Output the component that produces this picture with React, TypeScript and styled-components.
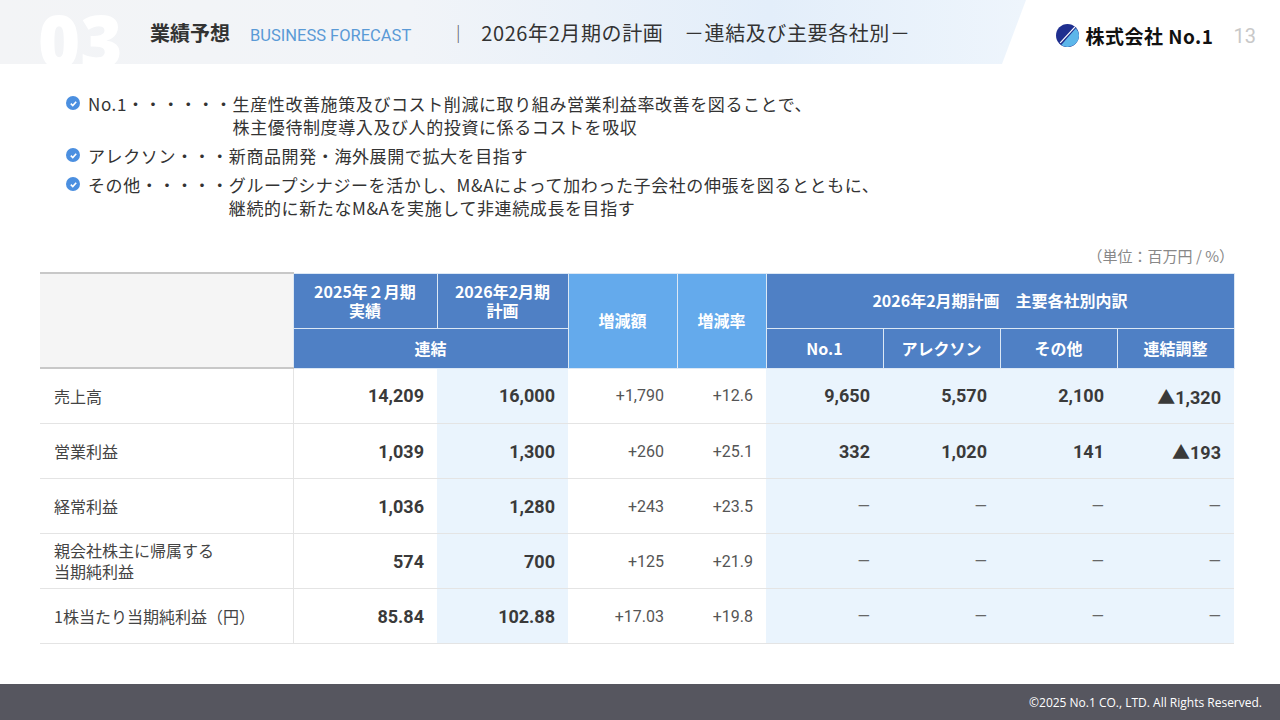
import React from 'react';
import styled, { createGlobalStyle } from 'styled-components';

const Global = createGlobalStyle`
  html, body { margin: 0; padding: 0; background: #fff; }
  body { font-family: "Noto Sans CJK JP", "Noto Sans", sans-serif; color: #333; }
`;

const Page = styled.div`
  width: 1280px;
  height: 720px;
  position: relative;
  overflow: hidden;
  display: flex;
  flex-direction: column;
`;

const Header = styled.header`
  height: 64px;
  display: flex;
  align-items: center;
  position: relative;
  background: linear-gradient(90deg, #f3f4f6 0%, #f1f4f8 40%, #e3eefa 75%, #eef5fc 100%);
  clip-path: polygon(0 0, 1026px 0, 1002px 100%, 0 100%);
  width: 1026px;
`;

const BigNum = styled.div`
  position: absolute;
  left: 38px;
  top: 4px;
  font-family: "Open Sans", sans-serif;
  font-weight: 800;
  font-size: 72px;
  line-height: 72px;
  color: #fff;
`;

const HeadText = styled.div`
  display: flex;
  align-items: baseline;
  margin-left: 150px;
  gap: 20px;
  z-index: 1;
`;

const Title = styled.span`
  font-size: 20px;
  font-weight: 700;
  color: #333;
`;

const Sub = styled.span`
  font-family: Roboto, sans-serif;
  font-size: 16.5px;
  color: #5a9ad6;
`;

const Sep = styled.span`
  color: #555;
  font-size: 18px;
  margin: 0 14px 0 18px;
`;

const Plan = styled.span`
  font-size: 20px;
  letter-spacing: 0.6px;
  color: #333;
`;

const Brand = styled.div`
  position: absolute;
  right: 24px;
  top: 22px;
  display: flex;
  align-items: center;
  gap: 6px;
`;

const BrandName = styled.span`
  font-size: 19px;
  font-weight: 700;
  color: #111;
  letter-spacing: 0.5px;
`;

const PageNo = styled.span`
  font-family: Roboto, sans-serif;
  font-size: 20px;
  color: #c8c8c8;
  margin-left: 14px;
`;

const Bullets = styled.ul`
  list-style: none;
  margin: 28px 0 0 66px;
  padding: 0;
  display: flex;
  flex-direction: column;
  gap: 6px;
`;

const Bullet = styled.li`
  display: flex;
  font-size: 17px;
  letter-spacing: 0.6px;
  line-height: 23px;
  color: #333;
`;

const Check = styled.span`
  width: 14px;
  height: 14px;
  border-radius: 50%;
  background: #4b8fe0;
  margin: 4px 8px 0 0;
  flex-shrink: 0;
  display: flex;
  align-items: center;
  justify-content: center;
`;

const Lead = styled.span`
  white-space: nowrap;
`;

const Unit = styled.div`
  text-align: right;
  margin: 26px 46px 6px 0;
  font-size: 15px;
  color: #888;
`;

const Table = styled.table`
  margin-left: 40px;
  width: 1194px;
  border-collapse: collapse;
  table-layout: fixed;
  font-family: Roboto, "Noto Sans CJK JP", sans-serif;
`;

const Th = styled.th<{ $light?: boolean }>`
  background: ${p => (p.$light ? '#64aaec' : '#4f80c5')};
  color: #fff;
  font-family: "Noto Sans CJK JP", sans-serif;
  font-weight: 700;
  font-size: 16px;
  line-height: 19px;
  border: 1px solid #dce8f5;
  padding: 0;
`;

const Blank = styled.th`
  background: #f5f5f5;
  border-top: 2px solid #c8c8c8;
  border-bottom: 2px solid #c8c8c8;
`;

const Td = styled.td<{ $bg?: boolean; $bold?: boolean; $dash?: boolean }>`
  height: 54px;
  padding: 0 13px 0 0;
  background: ${p => (p.$bg ? '#eaf4fd' : '#fff')};
  border-bottom: 1px solid #e4e4e4;
  text-align: right;
  font-size: ${p => (p.$bold ? '18px' : '16px')};
  font-weight: ${p => (p.$bold ? 700 : 400)};
  color: ${p => (p.$dash ? '#666' : p.$bold ? '#3a3a3a' : '#555')};
`;

const Label = styled.td`
  height: 54px;
  padding: 0 0 0 14px;
  font-family: "Noto Sans CJK JP", sans-serif;
  font-size: 16px;
  line-height: 21px;
  color: #444;
  border-bottom: 1px solid #e4e4e4;
  border-right: 1px solid #e4e4e4;
`;

const Footer = styled.footer`
  position: absolute;
  left: 0;
  bottom: 0;
  width: 100%;
  height: 36px;
  background: #56565f;
  color: #fff;
  font-family: "Open Sans", sans-serif;
  font-size: 12px;
  display: flex;
  align-items: center;
  justify-content: flex-end;
  padding-right: 18px;
  box-sizing: border-box;
`;

const CheckIcon = () => (
  <svg width="9" height="9" viewBox="0 0 10 10">
    <path d="M2 5.2 L4.2 7.3 L8 3" stroke="#fff" strokeWidth="1.8" fill="none" />
  </svg>
);

const Logo = () => (
  <svg width="23" height="23" viewBox="0 0 22 22">
    <circle cx="11" cy="11" r="11" fill="#1f2f8f" />
    <path d="M22 11 A11 11 0 0 1 5 20 L19 4 A11 11 0 0 1 22 11 Z" fill="#5cb6ea" />
    <path d="M4 18 L18 3" stroke="#fff" strokeWidth="1.2" />
  </svg>
);

const dash = '—';
const rows: { label: React.ReactNode; v: string[] }[] = [
  { label: '売上高', v: ['14,209', '16,000', '+1,790', '+12.6', '9,650', '5,570', '2,100', '▲1,320'] },
  { label: '営業利益', v: ['1,039', '1,300', '+260', '+25.1', '332', '1,020', '141', '▲193'] },
  { label: '経常利益', v: ['1,036', '1,280', '+243', '+23.5', dash, dash, dash, dash] },
  { label: <>親会社株主に帰属する<br />当期純利益</>, v: ['574', '700', '+125', '+21.9', dash, dash, dash, dash] },
  { label: '1株当たり当期純利益（円）', v: ['85.84', '102.88', '+17.03', '+19.8', dash, dash, dash, dash] },
];

const widths = [253, 144, 131, 109, 89, 117, 117, 117, 117];

export default function App() {
  return (
    <Page>
      <Global />
      <Header>
        <BigNum>03</BigNum>
        <HeadText>
          <Title>業績予想</Title>
          <Sub>BUSINESS FORECAST</Sub>
          <span>
            <Sep>｜</Sep>
            <Plan>2026年2月期の計画　－連結及び主要各社別－</Plan>
          </span>
        </HeadText>
      </Header>
      <Brand>
        <Logo />
        <BrandName>株式会社 No.1</BrandName>
        <PageNo>13</PageNo>
      </Brand>

      <Bullets>
        <Bullet>
          <Check><CheckIcon /></Check>
          <Lead>No.1・・・・・・</Lead>
          <span>生産性改善施策及びコスト削減に取り組み営業利益率改善を図ることで、<br />株主優待制度導入及び人的投資に係るコストを吸収</span>
        </Bullet>
        <Bullet>
          <Check><CheckIcon /></Check>
          <Lead>アレクソン・・・</Lead>
          <span>新商品開発・海外展開で拡大を目指す</span>
        </Bullet>
        <Bullet>
          <Check><CheckIcon /></Check>
          <Lead>その他・・・・・</Lead>
          <span>グループシナジーを活かし、M&Aによって加わった子会社の伸張を図るとともに、<br />継続的に新たなM&Aを実施して非連続成長を目指す</span>
        </Bullet>
      </Bullets>

      <Unit>（単位：百万円 / %）</Unit>

      <Table>
        <colgroup>
          {widths.map((w, i) => <col key={i} style={{ width: w }} />)}
        </colgroup>
        <thead>
          <tr style={{ height: 55 }}>
            <Blank rowSpan={2} />
            <Th>2025年２月期<br />実績</Th>
            <Th>2026年2月期<br />計画</Th>
            <Th $light rowSpan={2}>増減額</Th>
            <Th $light rowSpan={2}>増減率</Th>
            <Th colSpan={4}>2026年2月期計画　主要各社別内訳</Th>
          </tr>
          <tr style={{ height: 40 }}>
            <Th colSpan={2}>連結</Th>
            <Th>No.1</Th>
            <Th>アレクソン</Th>
            <Th>その他</Th>
            <Th>連結調整</Th>
          </tr>
        </thead>
        <tbody>
          {rows.map((r, i) => (
            <tr key={i}>
              <Label>{r.label}</Label>
              {r.v.map((v, j) => (
                <Td key={j} $bg={j === 1 || j >= 4} $dash={v === dash} $bold={j < 2 || (j >= 4 && v !== dash)}>
                  {v}
                </Td>
              ))}
            </tr>
          ))}
        </tbody>
      </Table>

      <Footer>©2025 No.1 CO., LTD. All Rights Reserved.</Footer>
    </Page>
  );
}
